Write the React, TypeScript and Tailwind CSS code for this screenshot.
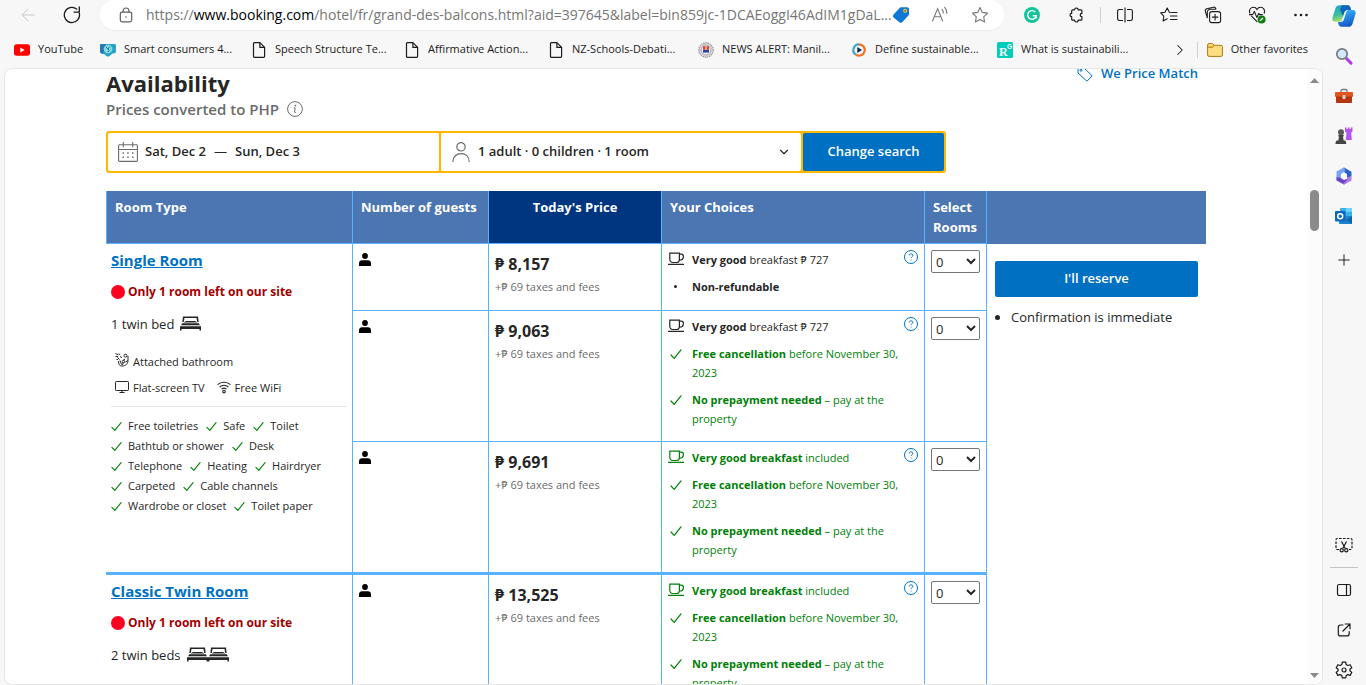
/**
 * Hotel availability page inside a browser window.
 *
 * - BrowserToolbar: navigation buttons, address bar, extension icons
 * - BookmarksBar: favorites row
 * - AvailabilityPage: search bar and room table
 * - AppSidebar: shortcuts on the right edge of the window
 */

import type { ReactNode } from 'react';
import { ArrowLeft, ChevronDown, ChevronRight, Plus } from 'lucide-react';

type IconProps = { className?: string };

// ---------------------------------------------------------------------------
// Toolbar icons
// ---------------------------------------------------------------------------

function ReloadIcon() {
  return (
    <svg viewBox="0 0 18 18" className="size-[18px]" fill="none" stroke="#1b1b1b" strokeWidth="1.3">
      <path d="M16.3 7.2A7.6 7.6 0 1 1 13.6 3" strokeLinecap="round" />
      <path d="M16.3 1v5.2h-5.2" strokeLinecap="round" strokeLinejoin="round" />
    </svg>
  );
}

function LockIcon() {
  return (
    <svg viewBox="0 0 16 16" className="size-4 shrink-0" fill="none" stroke="#5f5f5f" strokeWidth="1.2">
      <rect x="2.3" y="5.2" width="11.4" height="9.6" rx="1.8" />
      <path d="M5 5.2V4a3 3 0 0 1 6 0v1.2" />
      <circle cx="8" cy="10" r="0.8" fill="#5f5f5f" stroke="none" />
    </svg>
  );
}

function ShoppingTagIcon() {
  return (
    <svg viewBox="0 0 18 18" className="size-[18px]">
      <path d="M9 1.2h6.2A1.8 1.8 0 0 1 17 3v5.2c0 .6-.2 1-.6 1.4l-6.2 6.6c-.8.8-2 .8-2.8 0L1.6 11.4c-.8-.8-.8-2 0-2.8l6-6.7c.4-.4.8-.7 1.4-.7z" fill="#0f78d4" />
      <circle cx="13.2" cy="4.8" r="2" fill="#f5d24a" />
      <circle cx="13.2" cy="4.8" r="1" fill="#7a6a2a" />
    </svg>
  );
}

function ReadAloudIcon() {
  return (
    <svg viewBox="0 0 18 18" className="size-[18px]" fill="none" stroke="#767676" strokeWidth="1.1" strokeLinecap="round">
      <path d="M1.5 15 6.6 2.6 11.6 15M3.3 10.8h6.6" />
      <path d="M11 3.4c1 1 1.4 2.2 1.3 3.6M13.6 1.4c1.6 1.6 2.4 3.6 2.2 6" />
    </svg>
  );
}

function StarIcon() {
  return (
    <svg viewBox="0 0 18 18" className="size-[18px]" fill="none" stroke="#767676" strokeWidth="1.1" strokeLinejoin="round">
      <path d="M9 1.6l2.3 4.8 5.2.7-3.8 3.7.9 5.2L9 13.5 4.4 16l.9-5.2L1.5 7.1l5.2-.7z" />
    </svg>
  );
}

function GrammarlyIcon() {
  return (
    <svg viewBox="0 0 16 16" className="size-4" fill="none">
      <circle cx="8" cy="8" r="8" fill="#15c39a" />
      <path d="M11.2 5A4.3 4.3 0 1 0 12.2 8.9M8.8 8.7h3.4v2.9" stroke="#fff" strokeWidth="1.4" />
    </svg>
  );
}

function ExtensionsIcon() {
  return (
    <svg viewBox="0 0 16 16" className="size-4" fill="none" stroke="#1b1b1b" strokeWidth="1.2" strokeLinejoin="round">
      <path d="M4.700 2.800H6.600a1.800 1.800 0 0 1 3.600 0h2.700a1 1 0 0 1 1 1v2.500a1.700 1.700 0 0 0 0 3.400v2.500a1 1 0 0 1-1 1h-2.700a1.800 1.800 0 0 1-3.600 0H4.700a1 1 0 0 1-1-1V9.700a1.700 1.700 0 0 1 0-3.400V3.800a1 1 0 0 1 1-1z" />
    </svg>
  );
}

function SplitScreenIcon() {
  return (
    <svg viewBox="0 0 16 16" className="size-4" fill="none" stroke="#1b1b1b" strokeWidth="1.1">
      <path d="M6 2.5H2.4C1.4 2.5.6 3.2.6 4.2v7.6c0 1 .8 1.7 1.8 1.7H6M10 2.5h3.6c1 0 1.8.7 1.8 1.7v7.6c0 1-.8 1.7-1.8 1.7H10M8 .5v15" />
    </svg>
  );
}

function FavoritesIcon() {
  return (
    <svg viewBox="0 0 18 16" className="h-4 w-[18px]" fill="none" stroke="#1b1b1b" strokeWidth="1.1" strokeLinejoin="round" strokeLinecap="round">
      <path d="M10.5 5.5 9.4 5.3 7.2 1 5 5.3l-4.3.6 3.1 3.2-.7 4.9 4.1-2.2M11.5 5.5h5.5M10.5 9h6.500M10.500 12.500h6.500" />
    </svg>
  );
}

function CollectionsIcon() {
  return (
    <svg viewBox="0 0 18 18" className="size-[18px]" fill="none" stroke="#1b1b1b" strokeWidth="1.1" strokeLinecap="round" strokeLinejoin="round">
      <rect x="5.6" y="5.6" width="11" height="11" rx="2.2" />
      <path d="M11.1 8.3v5.6M8.3 11.1h5.6M3.300 11.800 1.400 5.300c-.3-1.200.3-2.200 1.400-2.500l6.600-1.600c1-.3 2 .3 2.300 1.200l.2.800H6.300a3 3 0 0 0-3 3z" />
    </svg>
  );
}

function EssentialsIcon() {
  return (
    <svg viewBox="0 0 18 18" className="size-[18px]" fill="none">
      <path d="M1.8 7C.6 3.5 3 1.2 5.4 1.2c1.6 0 2.9.9 3.6 2.2.7-1.3 2-2.2 3.6-2.2 2.5 0 4.9 2.4 3.6 6M3.5 10.2 9 15.6" stroke="#1b1b1b" strokeWidth="1.1" strokeLinecap="round" />
      <path d="M1 8.6h3.6l1.8-3.2 2.4 6 2-4 .9 1.2h3" stroke="#1b1b1b" strokeWidth="1.1" strokeLinejoin="round" />
      <circle cx="13.6" cy="13.6" r="4" fill="#107c10" />
      <path d="m12 14.8 3-2.8" stroke="#fff" strokeWidth="1.2" />
    </svg>
  );
}

function MoreIcon() {
  return (
    <svg viewBox="0 0 16 4" className="h-1 w-4" fill="#1b1b1b">
      <circle cx="2.5" cy="2" r="1.3" />
      <circle cx="8" cy="2" r="1.3" />
      <circle cx="13.5" cy="2" r="1.3" />
    </svg>
  );
}

// ---------------------------------------------------------------------------
// Bookmark icons
// ---------------------------------------------------------------------------

function YouTubeIcon() {
  return (
    <svg viewBox="0 0 16 16" className="size-4 shrink-0">
      <rect y="2.3" width="16" height="11.4" rx="2.6" fill="#f00" />
      <path d="M6.3 5.6v4.8L10.600 8z" fill="#fff" />
    </svg>
  );
}

function SmartConsumersIcon() {
  return (
    <svg viewBox="0 0 16 14" className="h-3.5 w-4 shrink-0">
      <path d="M1.5 1h13C15.4 1 16 1.6 16 2.5v6c0 1.4-1.4 2-3.5 2L9 13.5H7L4 11C1.500 10.800 0 9.800 0 8.500v-6C0 1.600.6 1 1.500 1z" fill="#2ba3c4" />
      <path d="M0 2.5C0 1.6.6 1 1.5 1H6L3 10.8C1 10.5 0 9.700 0 8.500z" fill="#2778b5" />
      <circle cx="8" cy="6" r="4.3" fill="#7fdbe0" />
      <path d="M5.800 3.800 8 6l1.500-2.400M8 6l1.200 1.300L8 9" stroke="#20719c" strokeWidth="1" fill="none" />
    </svg>
  );
}

function FileIcon() {
  return (
    <svg viewBox="0 0 16 16" className="size-4 shrink-0" fill="none" stroke="#1b1b1b" strokeWidth="1.2" strokeLinejoin="round">
      <path d="M3.5.7h5.4l4.7 4.7v8.9c0 .6-.5 1-1 1H3.500c-.6 0-1-.4-1-1V1.700c0-.5.4-1 1-1z" />
      <path d="M8.900.700v4.700h4.700" />
    </svg>
  );
}

function SealIcon() {
  return (
    <svg viewBox="0 0 16 16" className="size-4 shrink-0">
      <circle cx="8" cy="8" r="7.2" fill="#d9d9d9" stroke="#9b9b9b" strokeWidth="1.2" strokeDasharray="1.5 0.7" />
      <circle cx="8" cy="8" r="4.9" fill="#f5f0ee" stroke="#8c8c96" strokeWidth="0.7" />
      <path d="M5 4.300h2.600v3.500H5zM8.400 4.300H11v3.500H8.400z" fill="#e0393b" />
      <path d="M5 7.800h6v2.800H5z" fill="#24469b" />
      <circle cx="8" cy="6.600" r="1" fill="#f6c945" />
    </svg>
  );
}

function PlayBadgeIcon() {
  return (
    <svg viewBox="0 0 16 16" className="size-4 shrink-0" fill="none" strokeWidth="2.2">
      <path d="M8 2.3a5.7 5.7 0 0 0-3 10.5" stroke="#3da7c9" />
      <path d="M8 2.300a5.700 5.700 0 1 1-3 10.500" stroke="#f37021" />
      <path d="M6.300 5v6l4.700-3z" fill="#14284b" />
    </svg>
  );
}

function ResearchGateIcon() {
  return (
    <svg viewBox="0 0 16 16" className="size-4 shrink-0" fill="#fff">
      <rect width="16" height="16" rx="1.5" fill="#00ccbb" />
      <text x="2" y="13.500" fontSize="12" fontWeight="700" className="font-['Liberation_Serif']">R</text>
      <text x="10" y="7" fontSize="6.500" fontWeight="700" className="font-['Liberation_Sans']">G</text>
    </svg>
  );
}

function FolderIcon() {
  return (
    <svg viewBox="0 0 16 16" className="size-4 shrink-0" fill="#ffde81" stroke="#ad7a12" strokeWidth="1">
      <path d="M.6 3c0-.8.6-1.400 1.400-1.400h3.600l1.700 1.700H14c.8 0 1.400.6 1.400 1.400v8.300c0 .8-.6 1.400-1.400 1.400H2c-.8 0-1.400-.6-1.400-1.400z" />
      <path d="M.6 5.200h4.800l1.900-1.900" fill="#f1bd2c" />
    </svg>
  );
}

// ---------------------------------------------------------------------------
// Sidebar icons
// ---------------------------------------------------------------------------

function CopilotIcon() {
  return (
    <svg viewBox="0 0 24 24" className="size-6">
      <defs>
        <linearGradient id="cp-left" x1="0" y1="0" x2="0.3" y2="1">
          <stop offset="0" stopColor="#1aa4d8" />
          <stop offset="0.6" stopColor="#35bf9c" />
          <stop offset="1" stopColor="#b6dc6a" />
        </linearGradient>
        <linearGradient id="cp-right" x1="0.3" y1="0" x2="0.6" y2="1">
          <stop offset="0" stopColor="#36b5f5" />
          <stop offset="1" stopColor="#1452c8" />
        </linearGradient>
      </defs>
      <path d="M7.500 1.200h8.200c1.300 0 2.200.8 2.600 2L19 6h-3.500c-1.800 0-2.700 1-3.200 2.500l-2.200 7c-.6 1.800-1.400 2.300-3 2.300H3.200C.9 17.800-.1 16 .5 13.800l3-9.600c.6-2 2-3 4-3z" fill="url(#cp-left)" />
      <path d="M9.500 1.200h6.200c1.300 0 2.200.8 2.600 2L19 6h-3.500c-1.800 0-2.700 1-3.200 2.500L11 12 8 6z" fill="#1266b8" />
      <path d="M16.500 22.800H9.300c-1.500 0-2.300-.9-2.700-2.200L6 18h2.700c1.800 0 2.700-1 3.200-2.500l2.200-7C14.600 6.800 15.500 6 17 6h3.800c2.300 0 3.300 1.900 2.700 4.100l-3 9.600c-.6 2-2 3.100-4 3.100z" fill="url(#cp-right)" />
    </svg>
  );
}

function SearchAppIcon() {
  return (
    <svg viewBox="0 0 18 18" className="size-[18px]" fill="none">
      <path d="m11.500 11.500 4.500 4.600" stroke="#b23be8" strokeWidth="3" strokeLinecap="round" />
      <circle cx="7" cy="7" r="5.200" fill="#cfe9fb" stroke="#747a80" strokeWidth="1.700" />
    </svg>
  );
}

function ToolboxIcon() {
  return (
    <svg viewBox="0 0 18 16" className="h-4 w-[18px]">
      <path d="M6 4.500V2.800c0-.8.5-1.300 1.300-1.300h3.400c.8 0 1.300.5 1.300 1.300v1.700" fill="none" stroke="#7b7b7b" strokeWidth="1.300" />
      <rect y="4" width="18" height="5" rx="1" fill="#e0561d" />
      <path d="M1 8.500h16V14c0 .6-.4 1-1 1H2c-.6 0-1-.4-1-1z" fill="#b5360f" />
      <rect x="7.500" y="7" width="3" height="4" rx="1" fill="#d9d9d9" />
    </svg>
  );
}

function GamesIcon() {
  return (
    <svg viewBox="0 0 18 18" className="size-[18px]">
      <path d="M10 .5h1.600v1.600h1.300V.5h1.600v1.600h1.300V.5h1.700v4l-1.300 1.300.6 7.200H10.800l.7-7.200L10 4.500z" fill="#b454f0" />
      <circle cx="6" cy="5.300" r="3" fill="#5b5b5b" />
      <path d="M3.300 8h5.400v1.400H7.900l.8 4h1.500c.7.600 1 1.500 1 3.600H.5c0-2 .4-3 1.300-3.600h1.500l.8-4h-.8z" fill="#454545" />
    </svg>
  );
}

function MicrosoftIcon() {
  return (
    <svg viewBox="0 0 18 18" className="size-[18px]">
      <path d="M9 .5 16.500 4.800v4.500L12 11V7.200L6 3z" fill="#2b62c9" />
      <path d="M9 .5 1.500 4.600v8.600l4.500-2V7l4.500-3z" fill="#7aa2f2" />
      <path d="M1.500 10v3.400L9 17.500l3-1.800v-4L9 13l-3-2z" fill="#6b45c7" />
      <path d="M16.500 8.500v5L9 17.500l-1-.6L12 13v-2z" fill="#b07be6" />
      <path d="M9 5.500 12 7.200v3.600L9 12.500l-3-1.700V7.200z" fill="#fff" />
    </svg>
  );
}

function OutlookIcon() {
  return (
    <svg viewBox="0 0 18 18" className="size-[18px]">
      <rect x="5" y="1" width="12" height="9" rx="1" fill="#33b2ea" />
      <path d="M11 1h5c.6 0 1 .4 1 1v3h-6z" fill="#6fd2f7" />
      <path d="M4 9h13v7c0 .6-.4 1-1 1H5c-.6 0-1-.4-1-1z" fill="#1a86d3" />
      <path d="m17 9-6 4 5.500 3.800c.3-.2.5-.5.500-.8z" fill="#1260a5" />
      <rect y="4" width="10.500" height="10.500" rx="1" fill="#0f68bd" />
      <circle cx="5.200" cy="9.200" r="2.500" fill="none" stroke="#fff" strokeWidth="1.500" />
    </svg>
  );
}

function ScreenshotIcon() {
  return (
    <svg viewBox="0 0 18 16" className="h-4 w-[18px]" fill="none" stroke="#1b1b1b" strokeWidth="1.2">
      <path d="M4 12.500H2.200c-.8 0-1.200-.5-1.200-1.200V2.700c0-.8.5-1.200 1.200-1.200h13.600c.8 0 1.200.5 1.200 1.200v8.600c0 .8-.5 1.200-1.200 1.200H14" strokeDasharray="2.600 1.300" />
      <path d="M6.500 4.500 10.300 11.500M11.500 4.500 7.700 11.500" />
      <circle cx="6.700" cy="13.300" r="1.600" />
      <circle cx="11.300" cy="13.300" r="1.600" />
    </svg>
  );
}

function SidePanelIcon() {
  return (
    <svg viewBox="0 0 16 16" className="size-4" fill="none" stroke="#1b1b1b" strokeWidth="1.2">
      <rect x="1.500" y="2.500" width="13" height="11" rx="1.800" />
      <path d="M10.500 2.500v11" />
    </svg>
  );
}

function OpenExternalIcon() {
  return (
    <svg viewBox="0 0 16 16" className="size-4" fill="none" stroke="#1b1b1b" strokeWidth="1.2" strokeLinecap="round" strokeLinejoin="round">
      <path d="M7 3H4.600C3.200 3 2.300 3.900 2.300 5.200v6.500c0 1.300.9 2.200 2.200 2.200H11c1.300 0 2.200-.9 2.200-2.200V9.500M9.200 2H14v4.800M14 2 7 9" />
    </svg>
  );
}

function GearIcon() {
  return (
    <svg viewBox="0 0 18 18" className="size-[18px]" fill="none" stroke="#1b1b1b" strokeWidth="1.2" strokeLinejoin="round">
      <path d="M7.300 1.200h3.400l.5 2.400 1.500.9 2.400-.8 1.700 3-1.900 1.600v1.500l1.900 1.600-1.700 3-2.400-.8-1.500.9-.5 2.300H7.300l-.5-2.300-1.500-.9-2.400.8-1.700-3 1.900-1.600V8.300L1.200 6.700l1.700-3 2.400.8 1.500-.9z" />
      <circle cx="9" cy="9" r="2" />
    </svg>
  );
}

// ---------------------------------------------------------------------------
// Room table icons
// ---------------------------------------------------------------------------

function InfoIcon() {
  return (
    <svg viewBox="0 0 16 16" className="size-4" fill="none" stroke="#6b6b6b" strokeWidth="1">
      <circle cx="8" cy="8" r="7.400" />
      <path d="M6.700 6.800h1.400L7.600 11c0 .5.600.8 1.400.3" />
      <circle cx="8.300" cy="4.600" r="0.500" fill="#6b6b6b" />
    </svg>
  );
}

function PriceTagIcon() {
  return (
    <svg viewBox="0 0 16 16" className="size-4" fill="none" stroke="#0071c2" strokeWidth="1">
      <path d="M1 1.500h5.500l8.700 8.300-5.200 5.400L1 7z" strokeLinejoin="round" />
      <circle cx="4" cy="4.300" r="1" />
    </svg>
  );
}

function CalendarIcon() {
  return (
    <svg viewBox="0 0 20 20" className="size-5 shrink-0" fill="none" stroke="#6b6b6b" strokeWidth="1.1">
      <path d="M1.500 2.800h17c.6 0 .9.300.9.900v14.800c0 .6-.3.900-.9.900h-17c-.6 0-.9-.3-.9-.9V3.700c0-.6.3-.9.900-.9zM.6 7.500h18.800M5.300 0v5.200M14.700 0v5.200" />
      <path d="M4.500 11h1.500M9.200 11h1.500M14 11h1.500M4.500 15.300h1.500M9.200 15.300h1.500M14 15.300h1.500" strokeWidth="1.600" />
    </svg>
  );
}

function PersonOutlineIcon() {
  return (
    <svg viewBox="0 0 20 20" className="size-5 shrink-0" fill="none" stroke="#6b6b6b" strokeWidth="1.2">
      <circle cx="10" cy="4.800" r="4.200" />
      <path d="M1.800 20c0-5 3.200-8.300 8.200-8.300s8.200 3.300 8.200 8.300" />
    </svg>
  );
}

function GuestIcon() {
  return (
    <svg viewBox="0 0 12 13" className="h-[13px] w-3" role="img" aria-label="1 guest">
      <circle cx="6" cy="3" r="2.900" />
      <path d="M0 13v-2.700C0 8.400 1.300 7.200 3 7.200h6c1.700 0 3 1.200 3 3.100V13z" />
    </svg>
  );
}

function BedIcon() {
  return (
    <svg viewBox="0 0 21 15" className="h-[15px] w-[21px] shrink-0" fill="#262626">
      <path d="M3 .5h15l.700 5.500h-1.500L16.500 2H4.500L3.800 6H2.300z" />
      <path d="M6 5h9l2.500 1.600H3.500z" />
      <path d="M2.200 7.300h16.600l1.200 2H1zM0 10.200h21V14.500h-1.500v-1.600H1.500v1.600H0z" />
    </svg>
  );
}

function ShowerIcon() {
  return (
    <svg viewBox="0 0 14 14" className="mb-1 size-3.5" fill="none" stroke="#262626" strokeWidth="1">
      <path d="M.5.500l3 1.500M.500 3.500h2.500M4 .500l1 1.500M5 3.500l2 1M2.500 4.500 4.500 6.500M1.500 6.500h1.500" />
      <path d="M3.500 8c0 3.500 1 5 3.500 5 3.500 0 6-2 6-5.500M8 7.500l2-1.500M5 7.500l1.500 4M8.500 9.500 7 12M13 3v4.500L10.500 9" />
      <circle cx="10.500" cy="2.700" r="1.500" />
      <circle cx="8.500" cy="8.600" r="1.300" />
    </svg>
  );
}

function TvIcon() {
  return (
    <svg viewBox="0 0 14 14" className="mb-0.5 size-3.5" fill="none" stroke="#262626" strokeWidth="1">
      <rect x="0.500" y="1.500" width="13" height="9" rx="0.800" />
      <path d="M7 10.500v2M4.500 12.500h5" />
    </svg>
  );
}

function WifiIcon() {
  return (
    <svg viewBox="0 0 14 14" className="mb-0.5 size-3.5" fill="none" stroke="#262626" strokeWidth="1.1">
      <path d="M.5 4.700a9.700 9.700 0 0 1 13 0M2.600 7a6.600 6.600 0 0 1 8.800 0M4.600 9.200a3.600 3.600 0 0 1 4.800 0" />
      <circle cx="7" cy="11.600" r="1.300" />
    </svg>
  );
}

function CheckIcon({ className }: IconProps) {
  return (
    <svg viewBox="0 0 12 12" className={className} fill="none" stroke="#008009">
      <path d="M1 7l3.200 3.300L11 1.800" strokeWidth="1.200" strokeLinecap="round" strokeLinejoin="round" />
    </svg>
  );
}

function CupIcon() {
  return (
    <svg viewBox="0 0 16 14" className="mb-0.5 h-3.5 w-4" fill="none" stroke="currentColor" strokeWidth="1.200">
      <path d="M1.800 1.100h9.600v6.100c0 2-1.200 3.300-3 3.300H4.800c-1.800 0-3-1.300-3-3.300zM11.400 2.200h1.900c1.400 0 2.100.8 2.100 2.200 0 2.300-1.400 3.800-3.900 3.800M0 12.400h16" />
    </svg>
  );
}

function HelpIcon() {
  return (
    <svg viewBox="0 0 14 14" className="size-3.5" fill="none" stroke="#0071c2" strokeWidth="1">
      <circle cx="7" cy="7" r="6.500" />
      <path d="M5.200 5.500c0-1.100.8-1.700 1.800-1.700s1.800.7 1.800 1.600c0 1.200-1.700 1.300-1.700 2.700" />
      <circle cx="7.100" cy="10" r="0.500" fill="#0071c2" stroke="none" />
    </svg>
  );
}

// ---------------------------------------------------------------------------
// Data
// ---------------------------------------------------------------------------

const BOOKMARKS: { label: string; icon: ReactNode; width: string }[] = [
  { label: 'YouTube', icon: <YouTubeIcon />, width: 'w-[86px]' },
  { label: 'Smart consumers 4...', icon: <SmartConsumersIcon />, width: 'w-[151px]' },
  { label: 'Speech Structure Te...', icon: <FileIcon />, width: 'w-[153px]' },
  { label: 'Affirmative Action...', icon: <FileIcon />, width: 'w-[144px]' },
  { label: 'NZ-Schools-Debati...', icon: <FileIcon />, width: 'w-[150px]' },
  { label: 'NEWS ALERT: Manil...', icon: <SealIcon />, width: 'w-[153px]' },
  { label: 'Define sustainable...', icon: <PlayBadgeIcon />, width: 'w-[146px]' },
  { label: 'What is sustainabili...', icon: <ResearchGateIcon />, width: 'w-[146px]' },
];

const FACILITIES = [
  ['Free toiletries', 'Safe', 'Toilet'],
  ['Bathtub or shower', 'Desk'],
  ['Telephone', 'Heating', 'Hairdryer'],
  ['Carpeted', 'Cable channels'],
  ['Wardrobe or closet', 'Toilet paper'],
];

type Offer = {
  price: string;
  breakfast: 'paid' | 'included';
  refundable: boolean;
  lastOfRoom?: boolean;
};

const SINGLE_ROOM_OFFERS: Offer[] = [
  { price: '8,157', breakfast: 'paid', refundable: false },
  { price: '9,063', breakfast: 'paid', refundable: true },
  { price: '9,691', breakfast: 'included', refundable: true, lastOfRoom: true },
];

const TWIN_ROOM_OFFERS: Offer[] = [
  { price: '13,525', breakfast: 'included', refundable: true },
];

// ---------------------------------------------------------------------------
// Browser chrome
// ---------------------------------------------------------------------------

function ToolbarButton({ label, children }: { label: string; children: ReactNode }) {
  return (
    <button aria-label={label} className="flex h-[30px] w-11 shrink-0 items-center justify-center">
      {children}
    </button>
  );
}

function BrowserToolbar() {
  return (
    <div className="flex h-[31px] shrink-0 items-start pl-1.5">
      <ToolbarButton label="Back">
        <ArrowLeft className="size-5 text-[#c6c6c6]" strokeWidth={1.2} />
      </ToolbarButton>
      <ToolbarButton label="Refresh">
        <ReloadIcon />
      </ToolbarButton>
      <div className="mr-1.5 ml-1.5 flex h-[30px] min-w-0 flex-1 items-center rounded-full bg-white pr-1 pl-[18px] shadow-[0_1px_1px_#ececec]">
        <LockIcon />
        <div className="ml-3 min-w-0 flex-1 overflow-hidden text-[14px] leading-5 whitespace-nowrap text-[#767676]">
          https://<span className="text-black">www.booking.com</span>
          /hotel/fr/grand-des-balcons.html?aid=397645&amp;label=bin859jc-1DCAEoggI46AdIM1gDaL...
        </div>
        <button aria-label="Shopping" className="flex w-7">
          <ShoppingTagIcon />
        </button>
        <button aria-label="Read aloud" className="flex w-10 justify-center">
          <ReadAloudIcon />
        </button>
        <button aria-label="Add to favorites" className="flex w-10 justify-center">
          <StarIcon />
        </button>
      </div>
      <ToolbarButton label="Grammarly">
        <GrammarlyIcon />
      </ToolbarButton>
      <ToolbarButton label="Extensions">
        <ExtensionsIcon />
      </ToolbarButton>
      <div className="mx-0.5 mt-[7px] h-4 w-px bg-[#cfcfcf]" />
      <ToolbarButton label="Split screen">
        <SplitScreenIcon />
      </ToolbarButton>
      <ToolbarButton label="Favorites">
        <FavoritesIcon />
      </ToolbarButton>
      <ToolbarButton label="Collections">
        <CollectionsIcon />
      </ToolbarButton>
      <ToolbarButton label="Browser essentials">
        <EssentialsIcon />
      </ToolbarButton>
      <ToolbarButton label="Settings and more">
        <MoreIcon />
      </ToolbarButton>
    </div>
  );
}

function BookmarksBar() {
  return (
    <nav className="flex h-[37px] shrink-0 items-center overflow-hidden pr-[15px] pl-3.5 text-[11px] text-[#1b1b1b]">
      {BOOKMARKS.map((bookmark) => (
        <a
          key={bookmark.label}
          href="#"
          className={`flex shrink-0 items-center gap-2 whitespace-nowrap ${bookmark.width}`}
        >
          {bookmark.icon}
          {bookmark.label}
        </a>
      ))}
      <div className="ml-auto flex shrink-0 items-center">
        <button aria-label="More favorites">
          <ChevronRight className="size-[18px]" strokeWidth={1.4} />
        </button>
        <div className="mr-[9px] ml-2 h-4 w-px bg-[#cfcfcf]" />
        <button className="flex items-center gap-2 whitespace-nowrap">
          <FolderIcon />
          Other favorites
        </button>
      </div>
    </nav>
  );
}

function SidebarButton({ label, children }: { label: string; children: ReactNode }) {
  return (
    <button aria-label={label} className="flex size-6 shrink-0 items-center justify-center">
      {children}
    </button>
  );
}

function AppSidebar() {
  return (
    <aside className="flex w-[43px] shrink-0 flex-col items-center justify-between pt-1 pr-0.5 pb-[3px]">
      <div className="flex flex-col items-center gap-4">
        <SidebarButton label="Copilot">
          <CopilotIcon />
        </SidebarButton>
        <SidebarButton label="Search">
          <SearchAppIcon />
        </SidebarButton>
        <SidebarButton label="Tools">
          <ToolboxIcon />
        </SidebarButton>
        <SidebarButton label="Games">
          <GamesIcon />
        </SidebarButton>
        <SidebarButton label="Microsoft 365">
          <MicrosoftIcon />
        </SidebarButton>
        <SidebarButton label="Outlook">
          <OutlookIcon />
        </SidebarButton>
        <div className="pt-1">
          <SidebarButton label="Customize">
            <Plus className="size-[18px] text-[#1b1b1b]" strokeWidth={1.3} />
          </SidebarButton>
        </div>
      </div>
      <div className="flex flex-col items-center">
        <SidebarButton label="Screenshot">
          <ScreenshotIcon />
        </SidebarButton>
        <div className="my-2.5 h-px w-7 bg-[#c4c4c4]" />
        <div className="flex flex-col gap-4">
          <SidebarButton label="Hide sidebar">
            <SidePanelIcon />
          </SidebarButton>
          <SidebarButton label="Open link">
            <OpenExternalIcon />
          </SidebarButton>
          <SidebarButton label="Settings">
            <GearIcon />
          </SidebarButton>
        </div>
      </div>
    </aside>
  );
}

function Scrollbar() {
  return (
    <div className="flex w-[15px] shrink-0 flex-col items-center bg-[#fcfcfc] pt-[9px] pb-1.5" aria-hidden="true">
      <svg viewBox="0 0 9 5" className="h-[5px] w-[9px]" fill="#8b8b8b">
        <path d="M0 5 4.500 0 9 5z" />
      </svg>
      <div className="mt-[107px] h-[41px] w-[9px] rounded-full bg-[#8b8b8b]" />
      <svg viewBox="0 0 9 5" className="mt-auto h-[5px] w-[9px]" fill="#8b8b8b">
        <path d="M0 0h9L4.500 5z" />
      </svg>
    </div>
  );
}

// ---------------------------------------------------------------------------
// Availability page
// ---------------------------------------------------------------------------

function SearchBar() {
  return (
    <div className="mt-3 flex h-[42px] w-[840px] max-w-full gap-0.5 rounded-[3px] bg-[#ffb700] p-0.5 text-[13px] font-semibold text-[#262626]">
      <button className="flex w-[331px] items-center gap-[7px] rounded-[2px] bg-white px-2.5">
        <CalendarIcon />
        <span className="flex gap-2">
          <span>Sat, Dec 2</span>
          <span className="font-normal">—</span>
          <span>Sun, Dec 3</span>
        </span>
      </button>
      <button className="flex flex-1 items-center gap-[7px] rounded-[2px] bg-white px-2.5">
        <PersonOutlineIcon />
        <span>1 adult · 0 children · 1 room</span>
        <ChevronDown className="ml-auto size-3.5" strokeWidth={2} />
      </button>
      <button className="w-[141px] rounded-[2px] bg-[#0071c2] text-white">Change search</button>
    </div>
  );
}

function RoomHeading({ name, beds, bedCount }: { name: string; beds: string; bedCount: number }) {
  return (
    <>
      <a href="#" className="block text-[15px] leading-5 font-bold text-[#0071c2] underline">
        {name}
      </a>
      <p className="mt-3 flex items-center gap-[3px] text-[12px] leading-5 font-bold text-[#a30000]">
        <span className="size-3.5 rounded-full bg-[#ff0020]" />
        Only 1 room left on our site
      </p>
      <p className="mt-3 flex items-center gap-1.5 text-[13px] leading-5">
        {beds}
        <span className="flex pb-0.5">
          {Array.from({ length: bedCount }, (_, i) => (
            <BedIcon key={i} />
          ))}
        </span>
      </p>
    </>
  );
}

function SingleRoomDetails() {
  return (
    <>
      <RoomHeading name="Single Room" beds="1 twin bed" bedCount={1} />
      <div className="mt-[18px] flex items-center gap-1 pl-1 text-[11px] leading-5">
        <ShowerIcon />
        Attached bathroom
      </div>
      <div className="mt-1.5 flex items-center gap-3 pl-1 text-[11px] leading-5">
        <span className="flex items-center gap-1">
          <TvIcon />
          Flat-screen TV
        </span>
        <span className="flex items-center gap-1">
          <WifiIcon />
          Free WiFi
        </span>
      </div>
      <hr className="mt-2 border-[#e7e7e7]" />
      <div className="mt-[9px] text-[11px] leading-5">
        {FACILITIES.map((line) => (
          <ul key={line[0]} className="flex gap-2">
            {line.map((facility) => (
              <li key={facility} className="flex items-center gap-1.5">
                <CheckIcon className="size-[11px]" />
                {facility}
              </li>
            ))}
          </ul>
        ))}
      </div>
    </>
  );
}

function TwinRoomDetails() {
  return (
    <>
      <RoomHeading name="Classic Twin Room" beds="2 twin beds" bedCount={2} />
      <svg viewBox="0 0 14 14" className="mt-[18px] ml-0.5 size-3.5" fill="none" stroke="#008009">
        <path d="M3 1.500h4M2 5l3-3.500L8 5v7H2z" />
      </svg>
    </>
  );
}

function Choice({ icon, green, children }: { icon: ReactNode; green?: boolean; children: ReactNode }) {
  return (
    <li className={`mb-2 flex ${green ? 'text-[#008009]' : ''}`}>
      <span className="flex h-[19px] w-6 shrink-0 items-center">{icon}</span>
      <span>{children}</span>
    </li>
  );
}

function Choices({ offer }: { offer: Offer }) {
  return (
    <div className="flex items-start">
      <ul className="flex-1 text-[11px] leading-[19px]">
        {offer.breakfast === 'paid' ? (
          <Choice icon={<CupIcon />}>
            <b>Very good</b> breakfast ₱ 727
          </Choice>
        ) : (
          <Choice green icon={<CupIcon />}>
            <b>Very good breakfast</b> included
          </Choice>
        )}
        {offer.refundable ? (
          <>
            <Choice green icon={<CheckIcon className="ml-0.5 size-3" />}>
              <b>Free cancellation</b> before November 30, 2023
            </Choice>
            <Choice green icon={<CheckIcon className="ml-0.5 size-3" />}>
              <b>No prepayment needed</b> – pay at the property
            </Choice>
          </>
        ) : (
          <Choice icon={<span className="ml-1.5 size-[3px] rounded-full bg-[#262626]" />}>
            <b>Non-refundable</b>
          </Choice>
        )}
      </ul>
      <button aria-label="Meal details">
        <HelpIcon />
      </button>
    </div>
  );
}

function OfferCells({ offer }: { offer: Offer }) {
  const edge = offer.lastOfRoom ? 'border-b-[3px]' : 'border-b';

  return (
    <>
      <td className={`border-r border-[#57b3ff] px-1.5 pt-[9px] ${edge}`}>
        <GuestIcon />
      </td>
      <td className={`border-r border-[#57b3ff] px-1.5 pt-[9px] ${edge}`}>
        <div className="text-[16px] leading-[22px] font-bold">₱ {offer.price}</div>
        <div className="text-[11px] leading-6 text-[#6b6b6b]">+₱ 69 taxes and fees</div>
      </td>
      <td className={`border-r border-[#57b3ff] px-1.5 pt-1.5 pb-[5px] ${edge}`}>
        <Choices offer={offer} />
      </td>
      <td className={`border-r border-[#57b3ff] px-1.5 pt-1.5 ${edge}`}>
        <select
          aria-label={`Rooms at ₱ ${offer.price}`}
          className="block h-[23px] w-[49px] rounded-[2px] border border-[#767676] bg-white text-[13px]"
        >
          <option>0</option>
          <option>1</option>
        </select>
      </td>
    </>
  );
}

function RoomTable() {
  const head = 'border-r border-b border-[#57b3ff] px-2 pt-1.5 pb-1.5 font-bold';

  return (
    <table className="mt-[18px] w-full table-fixed border-separate border-spacing-0 text-left [&_td]:align-top [&_th]:align-top">
      <colgroup>
        <col className="w-[247px]" />
        <col className="w-[136px]" />
        <col className="w-[173px]" />
        <col className="w-[263px]" />
        <col className="w-[62px]" />
        <col />
      </colgroup>
      <thead className="text-[13px] leading-5 text-white">
        <tr className="h-[53px]">
          <th className={`${head} border-l bg-[#4c76b2]`}>Room Type</th>
          <th className={`${head} bg-[#4c76b2] whitespace-nowrap`}>Number of guests</th>
          <th className={`${head} bg-[#003580] text-center`}>Today's Price</th>
          <th className={`${head} bg-[#4c76b2]`}>Your Choices</th>
          <th className={`${head} bg-[#4c76b2]`}>Select Rooms</th>
          <th className="bg-[#4c76b2]" aria-label="Reservation" />
        </tr>
      </thead>
      <tbody>
        {SINGLE_ROOM_OFFERS.map((offer, i) => (
          <tr key={offer.price} className="h-[67px]">
            {i === 0 && (
              <td rowSpan={3} className="border-r border-b-[3px] border-[#57b3ff] pt-1.5 pr-1.5 pl-[5px]">
                <SingleRoomDetails />
              </td>
            )}
            <OfferCells offer={offer} />
            {i === 0 && (
              <td rowSpan={4} className="px-2 pt-[17px]">
                <button className="h-9 w-full rounded-[2px] bg-[#0071c2] text-[13px] font-semibold text-white">
                  I'll reserve
                </button>
                <ul className="mt-2.5 list-disc pl-4 text-[13px] leading-5">
                  <li>Confirmation is immediate</li>
                </ul>
              </td>
            )}
          </tr>
        ))}
        {TWIN_ROOM_OFFERS.map((offer) => (
          <tr key={offer.price}>
            <td className="border-r border-b border-[#57b3ff] pt-1.5 pr-1.5 pl-[5px]">
              <TwinRoomDetails />
            </td>
            <OfferCells offer={offer} />
          </tr>
        ))}
      </tbody>
    </table>
  );
}

function AvailabilityPage() {
  return (
    <div className="min-w-0 flex-1 overflow-hidden">
      <div className="mx-auto -mt-1.5 max-w-[1100px] text-[#262626]">
        <div className="flex items-start justify-between">
          <h2 className="mt-1.5 text-[22px] leading-7 font-bold">Availability</h2>
          <a href="#" className="mr-2 flex h-[22px] items-center gap-2 text-[13px] font-semibold text-[#0071c2]">
            <PriceTagIcon />
            We Price Match
          </a>
        </div>
        <p className="mt-0.5 flex items-center gap-2 text-[15px] leading-5 font-semibold text-[#6b6b6b]">
          Prices converted to PHP
          <InfoIcon />
        </p>
        <SearchBar />
        <RoomTable />
      </div>
    </div>
  );
}

export default function App() {
  return (
    <div className="flex h-screen overflow-hidden bg-[#f7f7f7] font-['Open_Sans','Noto_Sans',sans-serif]">
      <div className="flex min-w-0 flex-1 flex-col">
        <BrowserToolbar />
        <BookmarksBar />
        <main className="ml-1 flex min-h-0 flex-1 overflow-hidden rounded-lg border border-[#e6e6e6] bg-white">
          <AvailabilityPage />
          <Scrollbar />
        </main>
      </div>
      <AppSidebar />
    </div>
  );
}
